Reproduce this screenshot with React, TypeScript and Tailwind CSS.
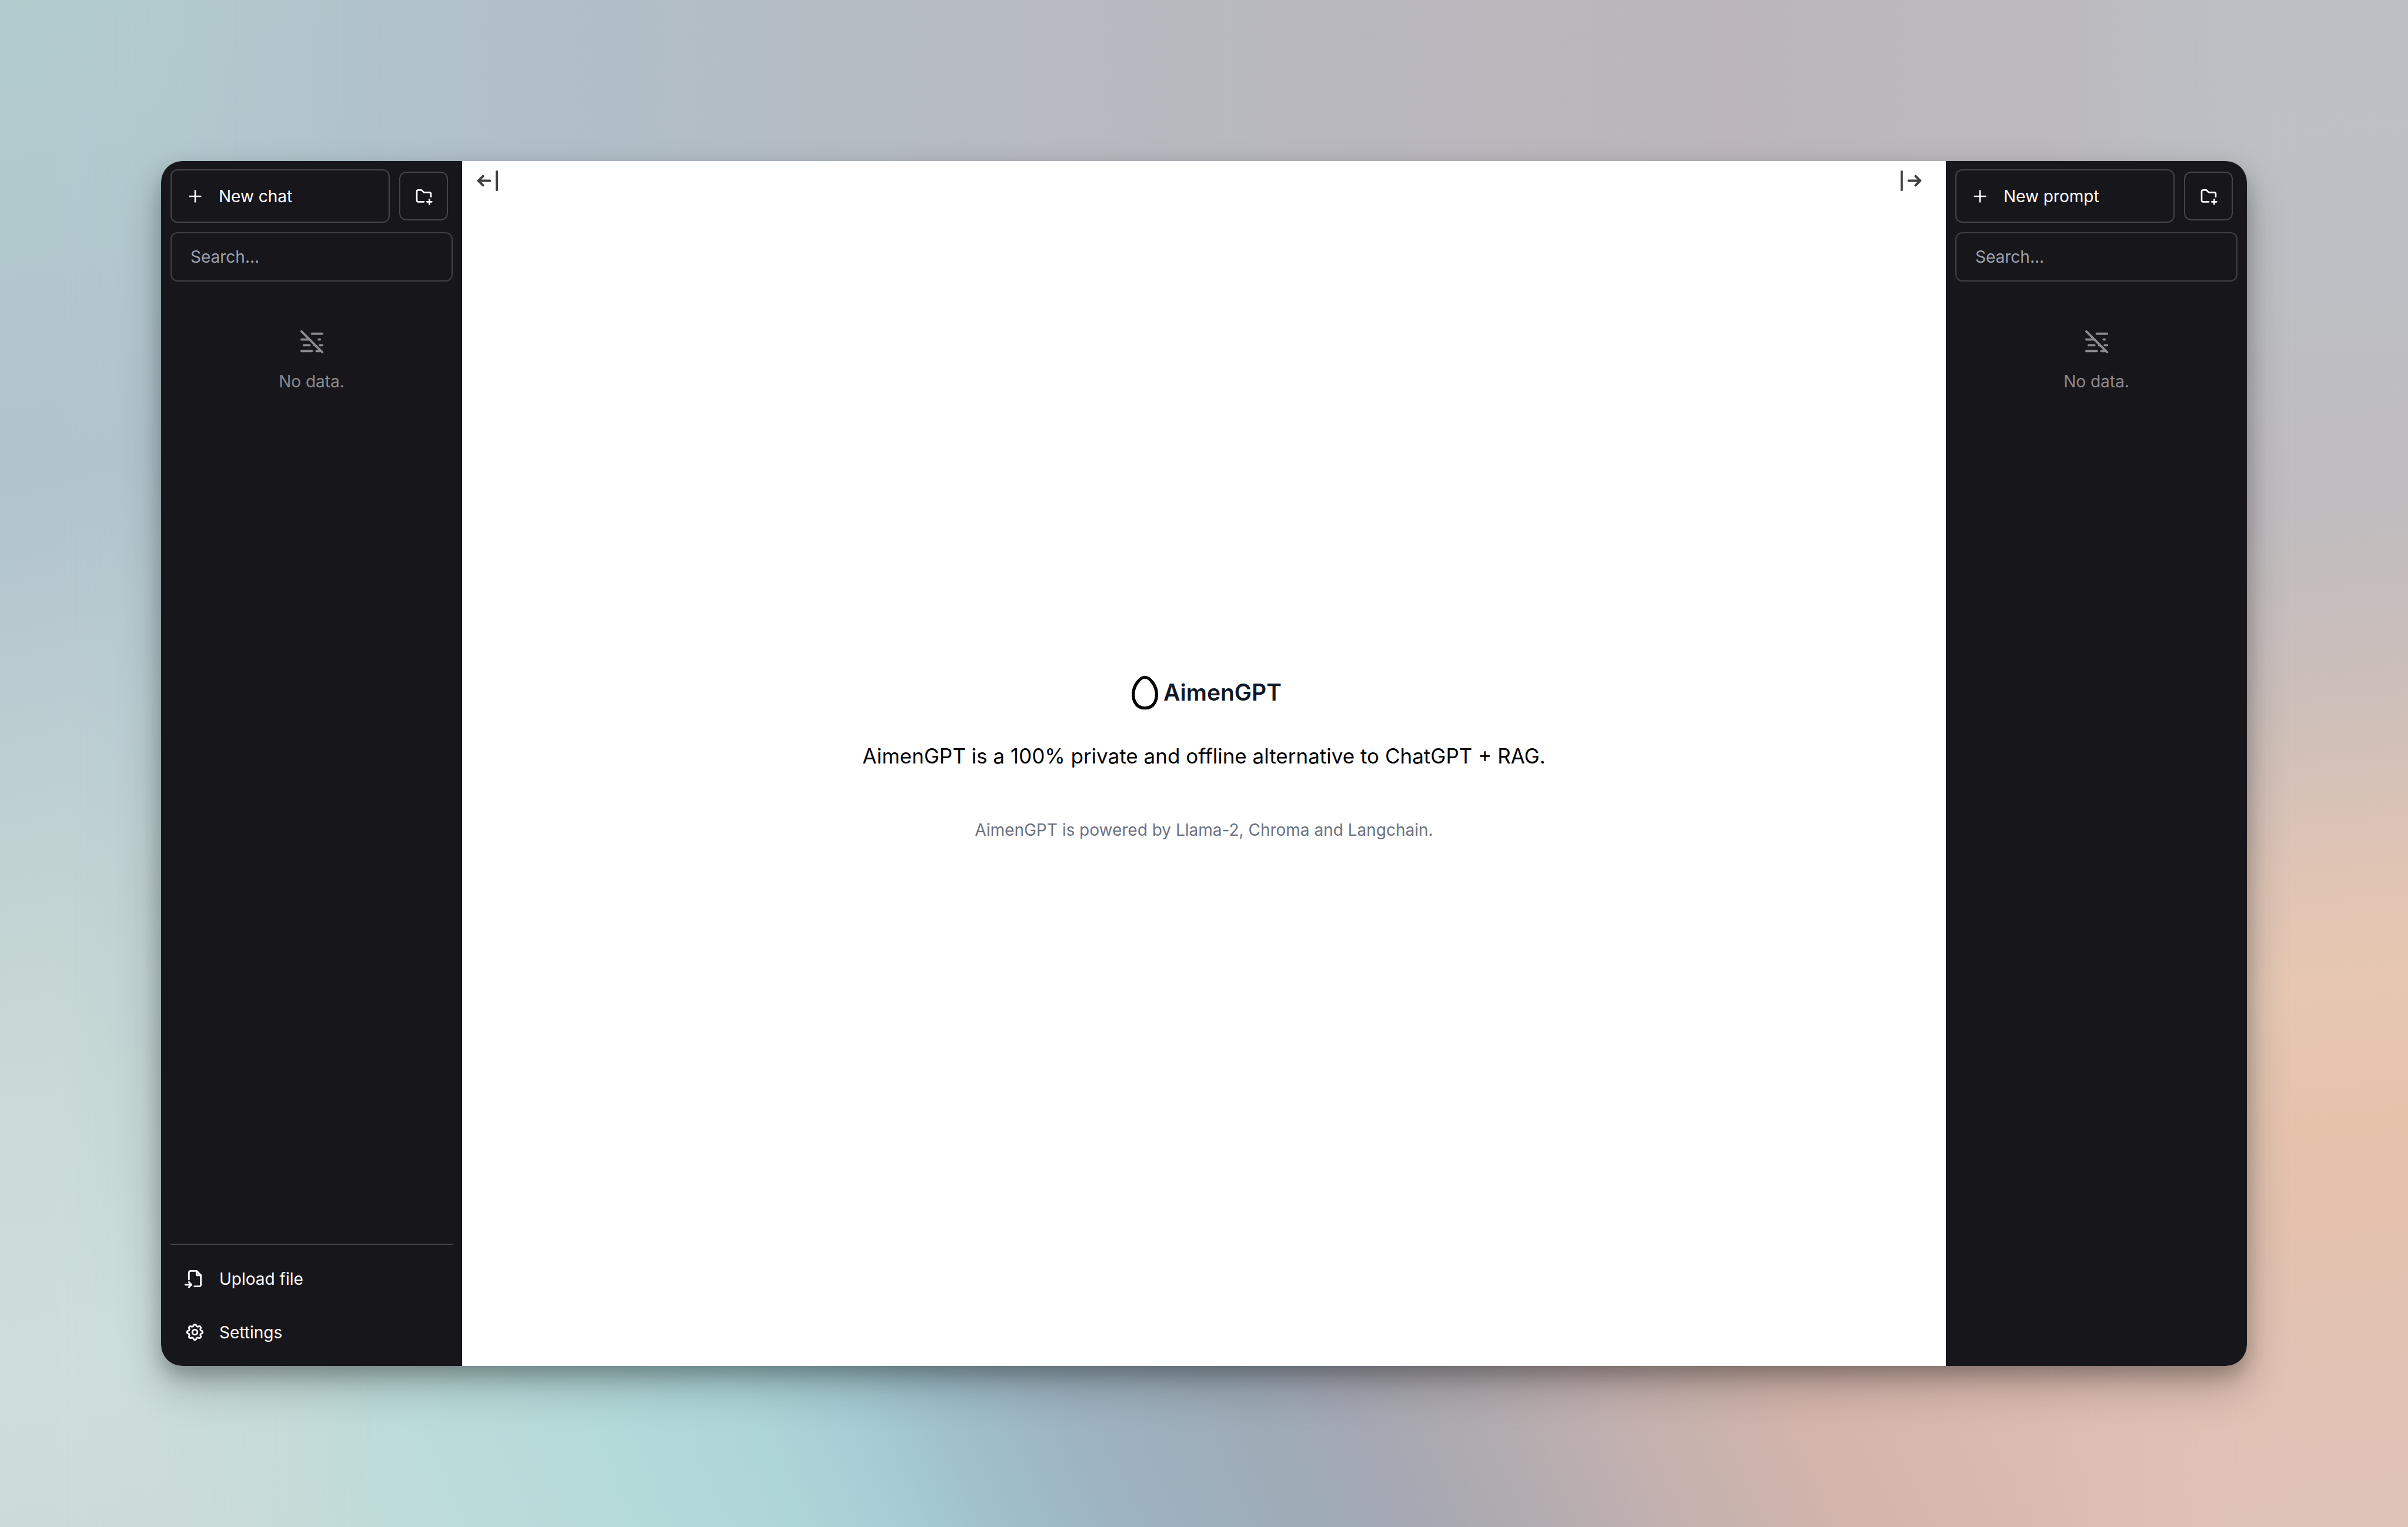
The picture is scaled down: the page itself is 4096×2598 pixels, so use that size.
import type { ReactNode } from "react";

type IconProps = { className?: string };

function Icon({ className, children }: { className?: string; children: ReactNode }) {
  return (
    <svg
      viewBox="0 0 24 24"
      fill="none"
      stroke="currentColor"
      strokeWidth={2}
      strokeLinecap="round"
      strokeLinejoin="round"
      aria-hidden="true"
      className={className}
    >
      {children}
    </svg>
  );
}

const PlusIcon = ({ className }: IconProps) => (
  <Icon className={className}>
    <path d="M12 5v14" />
    <path d="M5 12h14" />
  </Icon>
);

const FolderPlusIcon = ({ className }: IconProps) => (
  <Icon className={className}>
    <path d="M12 19h-7a2 2 0 0 1 -2 -2v-11a2 2 0 0 1 2 -2h4l3 3h7a2 2 0 0 1 2 2v3.5" />
    <path d="M16 19h6" />
    <path d="M19 16v6" />
  </Icon>
);

const MistOffIcon = ({ className }: IconProps) => (
  <Icon className={className}>
    <path d="M12 5h9M3 10h7M18 10h1M5 15h5M14 15h1m4 0h2M3 20h9m4 0h3M3 3l18 18" />
  </Icon>
);

const FileImportIcon = ({ className }: IconProps) => (
  <Icon className={className}>
    <path d="M14 3v4a1 1 0 0 0 1 1h4" />
    <path d="M5 13v-8a2 2 0 0 1 2 -2h7l5 5v11a2 2 0 0 1 -2 2h-5.5m-10.5 -2h7m-3 -3l3 3l-3 3" />
  </Icon>
);

const SettingsIcon = ({ className }: IconProps) => (
  <Icon className={className}>
    <path d="M10.325 4.317c.426 -1.756 2.924 -1.756 3.35 0a1.724 1.724 0 0 0 2.573 1.066c1.543 -.94 3.31 .826 2.37 2.37a1.724 1.724 0 0 0 1.065 2.572c1.756 .426 1.756 2.924 0 3.35a1.724 1.724 0 0 0 -1.066 2.573c.94 1.543 -.826 3.31 -2.37 2.37a1.724 1.724 0 0 0 -2.572 1.065c-.426 1.756 -2.924 1.756 -3.35 0a1.724 1.724 0 0 0 -2.573 -1.066c-1.543 .94 -3.31 -.826 -2.37 -2.37a1.724 1.724 0 0 0 -1.065 -2.572c-1.756 -.426 -1.756 -2.924 0 -3.35a1.724 1.724 0 0 0 1.066 -2.573c-.94 -1.543 .826 -3.31 2.37 -2.37c1 .608 2.296 .07 2.572 -1.065z" />
    <circle cx="12" cy="12" r="3" />
  </Icon>
);

const ArrowBarLeftIcon = ({ className }: IconProps) => (
  <Icon className={className}>
    <path d="M4 12h10" />
    <path d="M4 12l4 4" />
    <path d="M4 12l4 -4" />
    <path d="M20 4v16" />
  </Icon>
);

const ArrowBarRightIcon = ({ className }: IconProps) => (
  <Icon className={className}>
    <path d="M20 12h-10" />
    <path d="M20 12l-4 4" />
    <path d="M20 12l-4 -4" />
    <path d="M4 4v16" />
  </Icon>
);

const EggIcon = ({ className }: IconProps) => (
  <Icon className={className}>
    <path d="M12 22c6.23-.05 7.87-5.57 7.5-10-.36-4.34-3.95-9.96-7.5-10-3.55.04-7.14 5.66-7.5 10-.37 4.43 1.27 9.95 7.5 10z" />
  </Icon>
);

// Soft pastel desktop: one horizontal base blend with bottom, left and right blends faded over it.
function Wallpaper() {
  return (
    <div aria-hidden="true" className="absolute inset-0 overflow-hidden bg-[linear-gradient(90deg,#b1cbce_0%,#b1c5cb_10%,#b1bfc8_22%,#b5bcc3_36%,#b8b9c0_48%,#bab7be_60%,#bcb6bb_72%,#bcb9be_86%,#bcbfc5_100%)]">
      <div className="absolute inset-x-0 bottom-0 h-[24%] bg-[linear-gradient(66deg,#cddcd8_0%,#cadcd8_6%,#bfdcda_15%,#b5dad9_24%,#add6d8_31%,#a6cdd4_35%,#9fbfca_39%,#9db3c0_44%,#9eabb7_51%,#a5a8b3_55%,#b0abb0_59%,#c3b1af_65%,#d3b5ab_72%,#dcbcb1_81%,#dfc3b8_94%)] mask-[linear-gradient(to_top,black_50%,transparent)]" />
      <div className="absolute inset-y-0 left-0 w-[16%] bg-[linear-gradient(170deg,#b2ccce_0%,#b1c8cd_16%,#b1c3cb_30%,#b9cbd0_42%,#c3d4d4_58%,#cbdcd8_74%,#cddeda_86%,#cbdad8_100%)] mask-[linear-gradient(to_right,black_15%,transparent)]" />
      <div className="absolute inset-y-0 right-0 w-[16%] bg-[linear-gradient(175deg,#bcc0c5_0%,#bdbfc4_20%,#c0bcbf_34%,#cdbfb9_47%,#dfc4b4_57%,#e7c7b1_65%,#e6c2ab_74%,#e1c1b1_86%,#dfc3b8_100%)] mask-[linear-gradient(to_left,black_30%,transparent)]" />
    </div>
  );
}

type SidebarProps = {
  label: string;
  createLabel: string;
  folderLabel: string;
  searchLabel: string;
  children?: ReactNode;
};

function Sidebar({ label, createLabel, folderLabel, searchLabel, children }: SidebarProps) {
  return (
    <aside aria-label={label} className="flex w-[512px] shrink-0 flex-col bg-[#17161b] px-4 py-[14px] text-[28px] leading-[40px] text-white">
      <div className="flex items-center gap-4 pr-2">
        <button type="button" className="flex h-[91px] flex-1 items-center gap-6 rounded-xl border-2 border-white/20 px-6 text-left">
          <PlusIcon className="size-8" />
          {createLabel}
        </button>
        <button type="button" aria-label={folderLabel} className="flex size-[83px] items-center justify-center rounded-xl border-2 border-white/20">
          <FolderPlusIcon className="size-8" />
        </button>
      </div>
      <input
        type="text"
        aria-label={searchLabel}
        placeholder="Search..."
        className="mt-4 h-[84px] w-full rounded-xl border-2 border-neutral-700 bg-transparent px-8 text-white outline-none placeholder:text-[#9ca3af]"
      />
      <div className="mt-[79px] flex flex-1 flex-col items-center gap-6 text-white/50">
        <MistOffIcon className="size-[47px]" />
        <p>No data.</p>
      </div>
      {children}
    </aside>
  );
}

function FooterButton({ icon, children }: { icon: ReactNode; children: ReactNode }) {
  return (
    <button type="button" className="flex h-[87px] w-full items-center gap-6 rounded-xl px-6 text-left">
      {icon}
      {children}
    </button>
  );
}

export default function App() {
  return (
    <div className="relative flex min-h-screen p-[274px] font-['Inter',sans-serif]">
      <Wallpaper />
      <div className="relative flex flex-1 overflow-hidden rounded-[36px] bg-white shadow-[0_16px_32px_rgba(0,0,0,0.22),0_36px_72px_rgba(0,0,0,0.22)]">
        <Sidebar label="Chats" createLabel="New chat" folderLabel="New folder" searchLabel="Search chats">
          <div className="flex flex-col gap-1 border-t-2 border-white/20 pt-[14px]">
            <FooterButton icon={<FileImportIcon className="size-[35px]" />}>Upload file</FooterButton>
            <FooterButton icon={<SettingsIcon className="size-[35px]" />}>Settings</FooterButton>
          </div>
        </Sidebar>
        <main className="relative flex flex-1 flex-col items-center justify-center bg-white">
          <button type="button" aria-label="Hide chats" className="absolute top-[10px] left-5 text-neutral-700">
            <ArrowBarLeftIcon className="size-[47px]" />
          </button>
          <button type="button" aria-label="Hide prompts" className="absolute top-[10px] right-[36px] text-neutral-700">
            <ArrowBarRightIcon className="size-[47px]" />
          </button>
          <div className="flex flex-col items-center pb-5 text-center">
            <h1 className="flex items-center text-[39px] leading-[56px] font-semibold text-gray-900">
              <EggIcon className="size-[63px] text-black" />
              AimenGPT
            </h1>
            <p className="mt-12 text-[35px] leading-[56px] text-black">
              AimenGPT is a 100% private and offline alternative to ChatGPT + RAG.
            </p>
            <p className="mt-[78px] text-[28px] leading-[40px] text-[#6b7280]">
              AimenGPT is powered by Llama-2, Chroma and Langchain.
            </p>
          </div>
        </main>
        <Sidebar label="Prompts" createLabel="New prompt" folderLabel="New prompt folder" searchLabel="Search prompts" />
      </div>
    </div>
  );
}
